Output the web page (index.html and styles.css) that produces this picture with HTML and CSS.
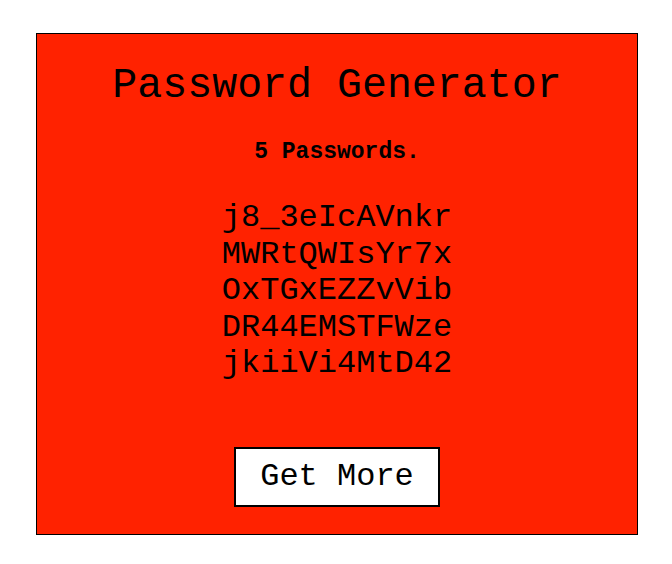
FILE: index.html
```html
<!DOCTYPE html>
<html>
<head>
<meta charset="utf-8">
<title>Password Generator</title>
<link rel="stylesheet" href="styles.css">
</head>
<body>
<div class="frame">
  <h1 class="title">Password Generator</h1>
  <p class="count">5 Passwords.</p>
  <ul class="list">
    <li>j8_3eIcAVnkr</li>
    <li>MWRtQWIsYr7x</li>
    <li>OxTGxEZZvVib</li>
    <li>DR44EMSTFWze</li>
    <li>jkiiVi4MtD42</li>
  </ul>
  <button class="btn">Get More</button>
</div>
</body>
</html>
```

FILE: styles.css
```css
html, body {
  margin: 0;
  padding: 0;
  background: #ffffff;
}
body {
  font-family: "Courier New", "Nimbus Mono PS", "Nimbus Mono L", "FreeMono", "Liberation Mono", monospace;
  color: #000;
}
.frame {
  margin: 33px 0 0 36px;
  width: 600px;
  border: 1px solid #000;
  background: #ff2200;
  padding: 27.5px 0;
  display: flex;
  flex-direction: column;
  align-items: center;
}
.title {
  margin: 0;
  font-size: 41.6px;
  font-weight: normal;
  line-height: 47px;
}
.count {
  margin: 30.5px 0 0;
  font-size: 23px;
  font-weight: bold;
  line-height: 26px;
}
.list {
  margin: 35px 0 0;
  padding: 0;
  list-style: none;
  font-size: 32px;
  line-height: 36.5px;
  text-align: center;
}
.btn {
  margin-top: 64px;
  font-family: inherit;
  font-size: 32px;
  line-height: 36px;
  color: #000;
  background: #fff;
  border: 2.5px solid #000;
  padding: 9px 24px;
  height: 60px;
  box-sizing: border-box;
}
```
